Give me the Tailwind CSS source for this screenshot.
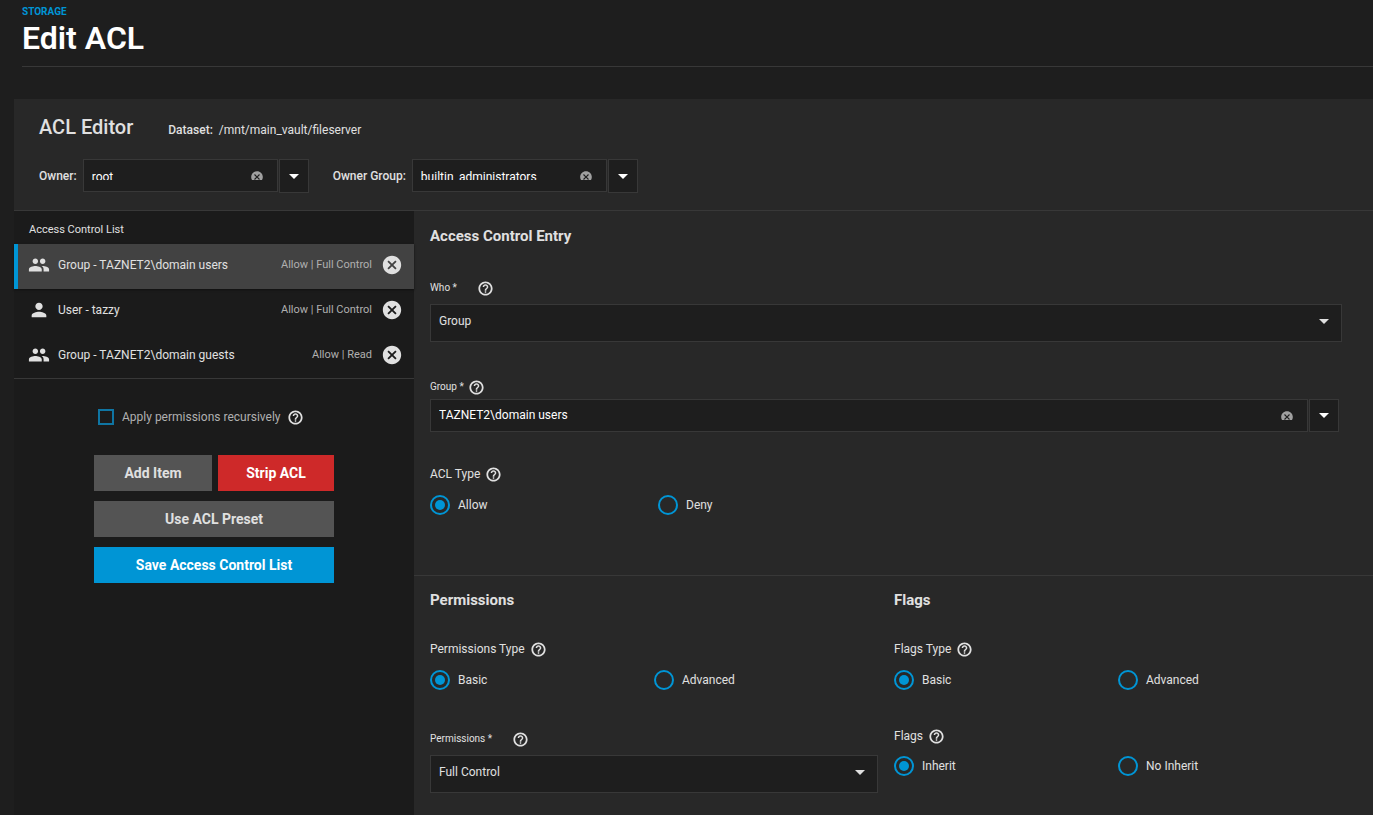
<!DOCTYPE html>
<html lang="en">
<head>
    <meta charset="UTF-8">
    <meta name="viewport" content="width=device-width, initial-scale=1.0">
    <title>Edit ACL</title>
    <script src="https://cdn.jsdelivr.net/npm/@tailwindcss/browser@4"></script>
</head>
<body class="flex min-h-screen flex-col bg-[#1e1e1e] font-[Roboto,sans-serif] text-xs text-[#e0e0e0]">
    <!-- Icon sprites -->
    <svg class="hidden" aria-hidden="true">
        <symbol id="help" viewBox="0 0 24 24"><path d="M11 18h2v-2h-2v2zm1-16C6.48 2 2 6.48 2 12s4.480 10 10 10 10-4.480 10-10S17.520 2 12 2zm0 17.500c-4.140 0-7.500-3.360-7.500-7.500S7.860 4.500 12 4.500s7.500 3.360 7.500 7.500-3.360 7.500-7.500 7.500zM12 6c-2.210 0-4 1.790-4 4h2.200c0-1 .8-1.800 1.800-1.800s1.800.8 1.800 1.800c0 1.900-2.900 1.700-2.900 5h2.200c0-2.250 2.900-2.500 2.900-5 0-2.210-1.790-4-4-4z"/></symbol>
        <symbol id="cancel" viewBox="0 0 24 24"><path d="M12 2C6.470 2 2 6.470 2 12s4.470 10 10 10 10-4.470 10-10S17.530 2 12 2zm5 13.590L15.590 17 12 13.410 8.410 17 7 15.590 10.590 12 7 8.410 8.410 7 12 10.590 15.590 7 17 8.410 13.410 12 17 15.590z"/></symbol>
        <symbol id="people" viewBox="0 0 24 24"><path d="M16 11c1.660 0 2.990-1.340 2.990-3S17.660 5 16 5c-1.660 0-3 1.340-3 3s1.340 3 3 3zm-8 0c1.660 0 2.990-1.340 2.990-3S9.660 5 8 5C6.340 5 5 6.340 5 8s1.340 3 3 3zm0 2c-2.330 0-7 1.170-7 3.500V19h14v-2.500c0-2.330-4.670-3.500-7-3.500zm8 0c-.29 0-.62.02-.97.05 1.160.84 1.970 1.970 1.970 3.450V19h6v-2.500c0-2.330-4.670-3.500-7-3.500z"/></symbol>
        <symbol id="person" viewBox="0 0 24 24"><path d="M12 12c2.210 0 4-1.790 4-4s-1.790-4-4-4-4 1.790-4 4 1.790 4 4 4zm0 2c-2.670 0-8 1.340-8 4v2h16v-2c0-2.660-5.330-4-8-4z"/></symbol>
        <symbol id="caret" viewBox="0 0 10 5"><path d="M0 0h10L5 5z"/></symbol>
    </svg>

    <header class="ml-[22px] border-b border-[#383838] pt-1 pb-2.5">
        <a href="#" class="block text-[10px] leading-4 font-bold text-[#0095d5] uppercase">Storage</a>
        <h1 class="text-[32px] leading-9 font-semibold text-white">Edit ACL</h1>
    </header>

    <main class="mt-8 ml-3.5 flex flex-1 flex-col bg-[#282828]">
        <section class="border-b border-[#383838] pt-4 pb-[17px] pl-[25px]">
            <div class="flex items-center gap-[35px]">
                <h2 class="text-xl leading-6 font-medium">ACL Editor</h2>
                <p class="pt-1.5"><span class="mr-1.5 font-medium">Dataset:</span>/mnt/main_vault/fileserver</p>
            </div>

            <div class="mt-5 flex items-center gap-6">
                <div class="flex items-center">
                    <label for="owner" class="mr-1.5 font-medium">Owner:</label>
                    <div class="flex items-start">
                        <div class="h-[33px] w-[195px] border border-[#383838] bg-[#1e1e1e] px-2">
                            <div class="flex h-5 items-start overflow-hidden">
                                <input id="owner" type="text" value="root" class="h-[34px] min-w-0 flex-1 text-white outline-none">
                                <button type="button" aria-label="Clear owner" class="mt-[9px] mr-1 p-px"><svg class="size-[14px] fill-[#a0a0a0]"><use href="#cancel"/></svg></button>
                            </div>
                        </div>
                        <button type="button" aria-label="Show owners" class="ml-px grid h-[34px] w-[30px] place-items-center border border-[#383838] bg-[#1e1e1e]"><svg class="h-[5px] w-2.5 fill-white"><use href="#caret"/></svg></button>
                    </div>
                </div>
                <div class="flex items-center">
                    <label for="ownerGroup" class="mr-1.5 font-medium">Owner Group:</label>
                    <div class="flex items-start">
                        <div class="h-[33px] w-[195px] border border-[#383838] bg-[#1e1e1e] px-2">
                            <div class="flex h-5 items-start overflow-hidden">
                                <input id="ownerGroup" type="text" value="builtin_administrators" class="h-[34px] min-w-0 flex-1 text-white outline-none">
                                <button type="button" aria-label="Clear owner group" class="mt-[9px] mr-1 p-px"><svg class="size-[14px] fill-[#a0a0a0]"><use href="#cancel"/></svg></button>
                            </div>
                        </div>
                        <button type="button" aria-label="Show owner groups" class="ml-px grid h-[34px] w-[30px] place-items-center border border-[#383838] bg-[#1e1e1e]"><svg class="h-[5px] w-2.5 fill-white"><use href="#caret"/></svg></button>
                    </div>
                </div>
            </div>
        </section>

        <div class="flex flex-1">
            <!-- Access control list -->
            <aside class="w-[400px] shrink-0 bg-[#1b1b1b]">
                <h3 class="pt-[9px] pb-1 pl-[15px] text-[11px] leading-5">Access Control List</h3>
                <ul class="border-b border-[#383838]">
                    <li class="flex h-[45px] items-center border-l-4 border-[#0095d5] bg-[#424242] pr-[11px] pb-[3px] pl-2.5 shadow-[0_1px_2px_#111]">
                        <svg class="mr-2 size-[22px] fill-[#e0e0e0]"><use href="#people"/></svg>
                        <span class="flex-1">Group - TAZNET2\domain users</span>
                        <span class="mr-[9px] pt-px text-[11px] text-[#b0b0b0]">Allow | Full Control</span>
                        <button type="button" aria-label="Remove domain users"><svg class="size-[22px] fill-[#e0e0e0]"><use href="#cancel"/></svg></button>
                    </li>
                    <li class="flex h-[45px] items-center pr-[11px] pb-[3px] pl-3.5">
                        <svg class="mr-2 size-[22px] fill-[#e0e0e0]"><use href="#person"/></svg>
                        <span class="flex-1">User - tazzy</span>
                        <span class="mr-[9px] pt-px text-[11px] text-[#b0b0b0]">Allow | Full Control</span>
                        <button type="button" aria-label="Remove tazzy"><svg class="size-[22px] fill-[#e0e0e0]"><use href="#cancel"/></svg></button>
                    </li>
                    <li class="flex h-11 items-center pr-[11px] pb-[3px] pl-3.5">
                        <svg class="mr-2 size-[22px] fill-[#e0e0e0]"><use href="#people"/></svg>
                        <span class="flex-1">Group - TAZNET2\domain guests</span>
                        <span class="mr-[9px] pt-px text-[11px] text-[#b0b0b0]">Allow | Read</span>
                        <button type="button" aria-label="Remove domain guests"><svg class="size-[22px] fill-[#e0e0e0]"><use href="#cancel"/></svg></button>
                    </li>
                </ul>

                <form class="mx-auto mt-7 w-[240px]">
                    <div class="flex h-5 items-center pl-1">
                        <input id="recursive" type="checkbox" class="size-4 appearance-none border-2 border-[#0f75a3] checked:bg-[#0095d5]">
                        <label for="recursive" class="ml-2 text-[#b0b0b0]">Apply permissions recursively</label>
                        <svg class="ml-1.5 size-[17px] fill-[#e0e0e0]"><use href="#help"/></svg>
                    </div>
                    <div class="mt-7 grid gap-2.5 text-sm font-bold">
                        <div class="grid grid-cols-[118fr_116fr] gap-1.5">
                            <button type="button" class="h-9 bg-[#545454]">Add Item</button>
                            <button type="button" class="h-9 bg-[#ce2929] text-white">Strip ACL</button>
                        </div>
                        <button type="button" class="h-9 bg-[#545454]">Use ACL Preset</button>
                        <button type="button" class="h-9 bg-[#0095d5] text-white">Save Access Control List</button>
                    </div>
                </form>
            </aside>

            <!-- Selected entry -->
            <form class="min-w-0 flex-1">
                <section class="border-b border-[#383838] pt-[15px] pr-[31px] pb-15 pl-4">
                    <h3 class="text-[15px] leading-5 font-bold">Access Control Entry</h3>

                    <div class="mt-8 flex h-5 items-center gap-5">
                        <label for="who" class="text-[10px]">Who *</label>
                        <svg class="size-[17px] fill-[#e0e0e0]"><use href="#help"/></svg>
                    </div>
                    <div class="mt-1.5 grid items-center">
                        <select id="who" class="col-start-1 row-start-1 h-[38px] w-full appearance-none border border-[#383838] bg-[#1e1e1e] px-2 pb-1">
                            <option>Group</option>
                            <option>User</option>
                        </select>
                        <svg class="pointer-events-none col-start-1 row-start-1 mr-[13px] mb-1 h-[5px] w-2.5 justify-self-end fill-[#e0e0e0]"><use href="#caret"/></svg>
                    </div>

                    <div class="mt-[35px] flex h-5 items-center gap-1">
                        <label for="group" class="text-[10px]">Group *</label>
                        <svg class="size-[17px] fill-[#e0e0e0]"><use href="#help"/></svg>
                    </div>
                    <div class="mt-0.5 mr-[3px] flex">
                        <div class="flex h-[33px] flex-1 items-start border border-[#383838] bg-[#1e1e1e] px-2">
                            <input id="group" type="text" value="TAZNET2\domain users" class="h-[30px] min-w-0 flex-1 text-white outline-none">
                            <div class="h-5 overflow-hidden">
                                <button type="button" aria-label="Clear group" class="mt-[9px] mr-1 p-px"><svg class="size-[14px] fill-[#a0a0a0]"><use href="#cancel"/></svg></button>
                            </div>
                        </div>
                        <button type="button" aria-label="Show groups" class="ml-px grid h-[33px] w-[30px] place-items-center border border-[#383838] bg-[#1e1e1e]"><svg class="h-[5px] w-2.5 fill-white"><use href="#caret"/></svg></button>
                    </div>

                    <fieldset class="mt-8">
                        <legend class="flex h-5 items-center gap-[5px]">ACL Type <svg class="size-[17px] fill-[#e0e0e0]"><use href="#help"/></svg></legend>
                        <div class="mt-[11px] grid grid-cols-4">
                            <label class="flex items-center gap-2"><input type="radio" name="aclType" checked class="grid size-5 appearance-none place-content-center rounded-full border-2 border-[#0095d5] before:size-2.5 before:rounded-full checked:before:bg-[#0095d5]">Allow</label>
                            <label class="flex items-center gap-2"><input type="radio" name="aclType" class="grid size-5 appearance-none place-content-center rounded-full border-2 border-[#0095d5] before:size-2.5 before:rounded-full checked:before:bg-[#0095d5]">Deny</label>
                        </div>
                    </fieldset>
                </section>

                <div class="grid grid-cols-2 gap-4 pt-3.5 pr-[31px] pb-5 pl-4">
                    <section>
                        <h3 class="text-[15px] leading-5 font-bold">Permissions</h3>
                        <fieldset class="mt-[29px]">
                            <legend class="flex h-5 items-center gap-[5px]">Permissions Type <svg class="size-[17px] fill-[#e0e0e0]"><use href="#help"/></svg></legend>
                            <div class="mt-[11px] grid grid-cols-2">
                                <label class="flex items-center gap-2"><input type="radio" name="permissionsType" checked class="grid size-5 appearance-none place-content-center rounded-full border-2 border-[#0095d5] before:size-2.5 before:rounded-full checked:before:bg-[#0095d5]">Basic</label>
                                <label class="flex items-center gap-2"><input type="radio" name="permissionsType" class="grid size-5 appearance-none place-content-center rounded-full border-2 border-[#0095d5] before:size-2.5 before:rounded-full checked:before:bg-[#0095d5]">Advanced</label>
                            </div>
                        </fieldset>
                        <div class="mt-[39px] flex h-5 items-center gap-5">
                            <label for="permissions" class="text-[10px]">Permissions *</label>
                            <svg class="size-[17px] fill-[#e0e0e0]"><use href="#help"/></svg>
                        </div>
                        <div class="mt-1.5 grid items-center">
                            <select id="permissions" class="col-start-1 row-start-1 h-[38px] w-full appearance-none border border-[#383838] bg-[#1e1e1e] px-2 pb-1">
                                <option>Full Control</option>
                                <option>Read</option>
                            </select>
                            <svg class="pointer-events-none col-start-1 row-start-1 mr-[13px] mb-1 h-[5px] w-2.5 justify-self-end fill-[#e0e0e0]"><use href="#caret"/></svg>
                        </div>
                    </section>

                    <section>
                        <h3 class="text-[15px] leading-5 font-bold">Flags</h3>
                        <fieldset class="mt-[29px]">
                            <legend class="flex h-5 items-center gap-[5px]">Flags Type <svg class="size-[17px] fill-[#e0e0e0]"><use href="#help"/></svg></legend>
                            <div class="mt-[11px] grid grid-cols-2">
                                <label class="flex items-center gap-2"><input type="radio" name="flagsType" checked class="grid size-5 appearance-none place-content-center rounded-full border-2 border-[#0095d5] before:size-2.5 before:rounded-full checked:before:bg-[#0095d5]">Basic</label>
                                <label class="flex items-center gap-2"><input type="radio" name="flagsType" class="grid size-5 appearance-none place-content-center rounded-full border-2 border-[#0095d5] before:size-2.5 before:rounded-full checked:before:bg-[#0095d5]">Advanced</label>
                            </div>
                        </fieldset>
                        <fieldset class="mt-9">
                            <legend class="flex h-5 items-center gap-[5px]">Flags <svg class="size-[17px] fill-[#e0e0e0]"><use href="#help"/></svg></legend>
                            <div class="mt-2.5 grid grid-cols-2">
                                <label class="flex items-center gap-2"><input type="radio" name="flags" checked class="grid size-5 appearance-none place-content-center rounded-full border-2 border-[#0095d5] before:size-2.5 before:rounded-full checked:before:bg-[#0095d5]">Inherit</label>
                                <label class="flex items-center gap-2"><input type="radio" name="flags" class="grid size-5 appearance-none place-content-center rounded-full border-2 border-[#0095d5] before:size-2.5 before:rounded-full checked:before:bg-[#0095d5]">No Inherit</label>
                            </div>
                        </fieldset>
                    </section>
                </div>
            </form>
        </div>
    </main>
</body>
</html>
